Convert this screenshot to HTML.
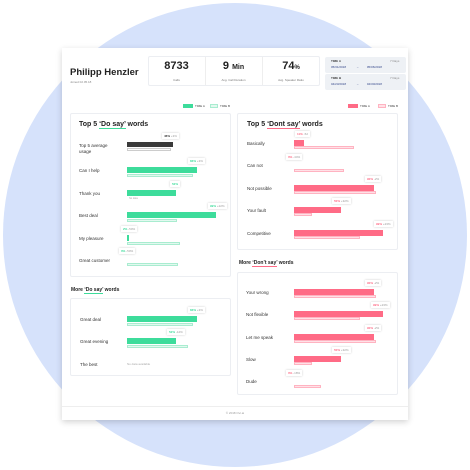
<!DOCTYPE html><html><head><style>
*{margin:0;padding:0;box-sizing:border-box}
body{width:470px;height:470px;background:#fff;position:relative;overflow:hidden;font-family:"Liberation Sans",sans-serif;color:#222}
.a{position:absolute}
.circ{left:3px;top:3px;width:464px;height:464px;border-radius:50%;background:#d6e2fb}
.page{left:62px;top:48px;width:346px;height:372px;background:#fff;box-shadow:0 2px 6px rgba(0,0,0,.18)}
.box{background:#fff;border:1px solid #eceef2;border-radius:2px}
.t{font-size:4px;color:#444;white-space:nowrap}
.lab{font-size:4.5px;color:#333;white-space:nowrap}
.ga{background:#3ddc9b;height:6px}
.gb{background:#e2f9ef;border:0.6px solid #a9ecd0;height:3px}
.pa{background:#ff6b86;height:6px}
.pb{background:#ffe1e7;border:0.6px solid #ffb3c1;height:3px}
.bd{font-size:3px;background:#fff;box-shadow:0 0 2px rgba(0,0,0,.2);padding:1px 2px;white-space:nowrap;color:#999}
.h{font-size:7px;font-weight:bold;white-space:nowrap}
.ug{border-bottom:1.2px solid #3ddc9b}.up{border-bottom:1.2px solid #ff6b86}
</style></head><body>
<div class="a circ"></div>
<div class="a page"></div>
<div class="a" style="left:70px;top:67px;font-size:9.5px;font-weight:bold">Philipp Henzler</div>
<div class="a t" style="left:70px;top:80px;font-size:3px;color:#888">Joined 02.05.18</div>
<div class="a box" style="left:148px;top:56px;width:172px;height:30px"></div>
<div class="a" style="left:205px;top:57px;width:1px;height:28px;background:#eee"></div>
<div class="a" style="left:262px;top:57px;width:1px;height:28px;background:#eee"></div>
<div class="a" style="left:148px;top:60px;width:57px;text-align:center;font-size:11px;font-weight:bold">8733</div>
<div class="a" style="left:205px;top:60px;width:57px;text-align:center;font-size:11px;font-weight:bold">9 <span style="font-size:7px">Min</span></div>
<div class="a" style="left:262px;top:60px;width:58px;text-align:center;font-size:11px;font-weight:bold">74<span style="font-size:6px">%</span></div>
<div class="a t" style="left:148px;top:78px;width:57px;text-align:center;font-size:3px;color:#777">Calls</div>
<div class="a t" style="left:205px;top:78px;width:57px;text-align:center;font-size:3px;color:#777">Avg. Call Duration</div>
<div class="a t" style="left:262px;top:78px;width:58px;text-align:center;font-size:3px;color:#777">Avg. Speaker Ratio</div>
<div class="a" style="left:325px;top:57px;width:81px;height:16px;background:#eef1f5;border-radius:2px"></div>
<div class="a" style="left:325px;top:74px;width:81px;height:16px;background:#eef1f5;border-radius:2px"></div>
<div class="a t" style="left:331px;top:59px;font-size:3px;font-weight:bold">TIME A</div><div class="a t" style="left:390px;top:59px;font-size:3px;color:#888">7 Days</div>
<div class="a t" style="left:331px;top:65px;font-size:3px;color:#34478a">05/31/2018 &nbsp;&nbsp;&nbsp;&nbsp;&nbsp;&nbsp;&nbsp;&nbsp;&nbsp;&nbsp;&nbsp; – &nbsp;&nbsp;&nbsp;&nbsp;&nbsp;&nbsp;&nbsp;&nbsp; 05/06/2018</div>
<div class="a t" style="left:331px;top:76px;font-size:3px;font-weight:bold">TIME B</div><div class="a t" style="left:390px;top:76px;font-size:3px;color:#888">7 Days</div>
<div class="a t" style="left:331px;top:82px;font-size:3px;color:#34478a">04/23/2018 &nbsp;&nbsp;&nbsp;&nbsp;&nbsp;&nbsp;&nbsp;&nbsp;&nbsp;&nbsp;&nbsp; – &nbsp;&nbsp;&nbsp;&nbsp;&nbsp;&nbsp;&nbsp;&nbsp; 04/30/2018</div>
<div class="a ga" style="left:183px;top:104px;width:10px;height:4px"></div><div class="a t" style="left:195px;top:104px;font-size:3px">TIME A</div>
<div class="a gb" style="left:210px;top:104px;width:8px;height:4px"></div><div class="a t" style="left:220px;top:104px;font-size:3px">TIME B</div>
<div class="a pa" style="left:348px;top:104px;width:10px;height:4px"></div><div class="a t" style="left:360px;top:104px;font-size:3px">TIME A</div>
<div class="a pb" style="left:378px;top:104px;width:8px;height:4px"></div><div class="a t" style="left:388px;top:104px;font-size:3px">TIME B</div>

<div class="a box" style="left:70px;top:113px;width:161px;height:164px"></div>
<div class="a h" style="left:79px;top:121px">Top 5 <span class="ug">‘Do say’</span> words</div>
<div class="a lab" style="left:79px;top:143px;line-height:6px">Top 5 average<br>usage</div>
<div class="a" style="left:127px;top:142px;width:46px;height:5px;background:#3a3a3a"></div>
<div class="a" style="left:127px;top:148px;width:44px;height:3px;border:0.6px solid #ccc"></div>
<div class="a bd" style="left:162px;top:133px"><b style="color:#333">46%</b> +3%</div>
<div class="a lab" style="left:79px;top:168px">Can I help</div>
<div class="a ga" style="left:127px;top:167px;width:70px"></div><div class="a gb" style="left:127px;top:174px;width:66px"></div>
<div class="a bd" style="left:188px;top:158px"><b style="color:#3ddc9b">83%</b> +3%</div>
<div class="a lab" style="left:79px;top:191px">Thank you</div>
<div class="a ga" style="left:127px;top:190px;width:49px"></div><div class="a t" style="left:129px;top:197px;font-size:2.5px;color:#aaa">No data</div>
<div class="a bd" style="left:170px;top:181px"><b style="color:#3ddc9b">52%</b></div>
<div class="a lab" style="left:79px;top:213px">Best deal</div>
<div class="a ga" style="left:127px;top:212px;width:89px"></div><div class="a gb" style="left:127px;top:219px;width:50px"></div>
<div class="a bd" style="left:208px;top:203px"><b style="color:#3ddc9b">99%</b> +22%</div>
<div class="a lab" style="left:79px;top:236px">My pleasure</div>
<div class="a ga" style="left:127px;top:235px;width:2px"></div><div class="a gb" style="left:127px;top:242px;width:53px"></div>
<div class="a bd" style="left:121px;top:226px"><b style="color:#3ddc9b">2%</b> -50%</div>
<div class="a lab" style="left:79px;top:258px">Great customer</div>
<div class="a gb" style="left:127px;top:263px;width:51px"></div>
<div class="a bd" style="left:119px;top:248px"><b style="color:#3ddc9b">0%</b> -50%</div>

<div class="a h" style="left:71px;top:287px;font-size:5px">More <span class="ug">‘Do say’</span> words</div>
<div class="a box" style="left:70px;top:298px;width:161px;height:78px"></div>
<div class="a lab" style="left:80px;top:317px">Great deal</div>
<div class="a ga" style="left:127px;top:316px;width:70px"></div><div class="a gb" style="left:127px;top:323px;width:66px"></div>
<div class="a bd" style="left:188px;top:307px"><b style="color:#3ddc9b">83%</b> +3%</div>
<div class="a lab" style="left:80px;top:339px">Great evening</div>
<div class="a ga" style="left:127px;top:338px;width:49px"></div><div class="a gb" style="left:127px;top:345px;width:61px"></div>
<div class="a bd" style="left:167px;top:329px"><b style="color:#3ddc9b">52%</b> -12%</div>
<div class="a lab" style="left:80px;top:362px">The best</div>
<div class="a t" style="left:127px;top:362px;font-size:3px;color:#aaa">No data available</div>

<div class="a box" style="left:237px;top:113px;width:161px;height:137px"></div>
<div class="a h" style="left:247px;top:121px">Top 5 <span class="up">‘Dont say’</span> words</div>
<div class="a lab" style="left:247px;top:141px">Basically</div>
<div class="a pa" style="left:294px;top:140px;width:10px"></div><div class="a pb" style="left:294px;top:146px;width:60px"></div>
<div class="a bd" style="left:295px;top:131px"><b style="color:#ff6b86">11%</b> -52</div>
<div class="a lab" style="left:247px;top:163px">Can not</div>
<div class="a pb" style="left:294px;top:169px;width:50px"></div>
<div class="a bd" style="left:286px;top:154px"><b style="color:#ff6b86">0%</b> -44%</div>
<div class="a lab" style="left:247px;top:186px">Not possible</div>
<div class="a pa" style="left:294px;top:185px;width:80px"></div><div class="a pb" style="left:294px;top:191px;width:82px"></div>
<div class="a bd" style="left:365px;top:176px"><b style="color:#ff6b86">90%</b> -2%</div>
<div class="a lab" style="left:247px;top:208px">Your fault</div>
<div class="a pa" style="left:294px;top:207px;width:47px"></div><div class="a pb" style="left:294px;top:213px;width:18px"></div>
<div class="a bd" style="left:332px;top:198px"><b style="color:#ff6b86">50%</b> +32%</div>
<div class="a lab" style="left:247px;top:231px">Competitive</div>
<div class="a pa" style="left:294px;top:230px;width:89px"></div><div class="a pb" style="left:294px;top:236px;width:66px"></div>
<div class="a bd" style="left:374px;top:221px"><b style="color:#ff6b86">99%</b> +23%</div>

<div class="a h" style="left:239px;top:260px;font-size:5px">More <span class="up">‘Don’t say’</span> words</div>
<div class="a box" style="left:237px;top:272px;width:161px;height:123px"></div>
<div class="a lab" style="left:246px;top:290px">Your wrong</div>
<div class="a pa" style="left:294px;top:289px;width:80px"></div><div class="a pb" style="left:294px;top:295px;width:82px"></div>
<div class="a bd" style="left:365px;top:280px"><b style="color:#ff6b86">90%</b> -2%</div>
<div class="a lab" style="left:246px;top:312px">Not flexible</div>
<div class="a pa" style="left:294px;top:311px;width:89px"></div><div class="a pb" style="left:294px;top:317px;width:66px"></div>
<div class="a bd" style="left:371px;top:302px"><b style="color:#ff6b86">99%</b> +23%</div>
<div class="a lab" style="left:246px;top:335px">Let me speak</div>
<div class="a pa" style="left:294px;top:334px;width:80px"></div><div class="a pb" style="left:294px;top:340px;width:82px"></div>
<div class="a bd" style="left:365px;top:325px"><b style="color:#ff6b86">90%</b> -2%</div>
<div class="a lab" style="left:246px;top:357px">Slow</div>
<div class="a pa" style="left:294px;top:356px;width:47px"></div><div class="a pb" style="left:294px;top:362px;width:18px"></div>
<div class="a bd" style="left:332px;top:347px"><b style="color:#ff6b86">50%</b> +32%</div>
<div class="a lab" style="left:246px;top:379px">Dude</div>
<div class="a pb" style="left:294px;top:385px;width:27px"></div>
<div class="a bd" style="left:286px;top:370px"><b style="color:#ff6b86">0%</b> -18%</div>

<div class="a" style="left:62px;top:406px;width:346px;height:1px;background:#eee"></div>
<div class="a t" style="left:62px;top:411px;width:346px;text-align:center;font-size:3px;color:#999">© 2018 Ovi.ai</div>
</body></html>
